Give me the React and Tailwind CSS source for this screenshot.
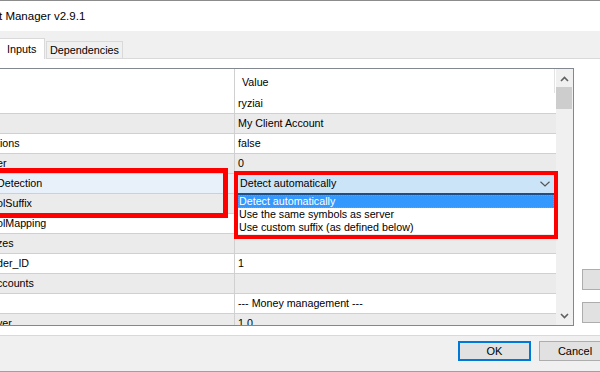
import React from "react";

const rows = [
  { name: "", value: "ryziai", bg: "w", first: true },
  { name: "", value: "My Client Account", bg: "g" },
  { name: "tions", value: "false", bg: "w" },
  { name: "er", value: "0", bg: "g" },
  { name: "Detection", value: "", bg: "s", combo: true },
  { name: "olSuffix", value: "", bg: "g" },
  { name: "olMapping", value: "", bg: "w" },
  { name: "zes", value: "", bg: "g" },
  { name: "der_ID", value: "1", bg: "w" },
  { name: "ccounts", value: "", bg: "g" },
  { name: "", value: "--- Money management ---", bg: "w" },
  { name: "ver", value: "1.0", bg: "g" },
];

function Chevron({ up }) {
  return (
    <svg width="9" height="6" viewBox="0 0 9 6">
      <polyline
        points={up ? "1,5 4.5,1.5 8,5" : "1,1 4.5,4.5 8,1"}
        fill="none"
        stroke="#606060"
        strokeWidth="1.6"
      />
    </svg>
  );
}

function Row({ r }) {
  const bg =
    r.bg === "g" ? "bg-[#ebebeb]" : r.bg === "s" ? "bg-[#e8f1fa]" : "bg-white";
  return (
    <div
      className={`flex h-[20px] flex-none ${r.first ? "" : "border-t border-[#d0d0d0]"} ${bg}`}
    >
      <div className="w-[235px] flex-none border-r border-[#d0d0d0] flex items-center overflow-hidden whitespace-nowrap">
        <span className="ml-[-3px]">{r.name}</span>
      </div>
      {r.combo ? (
        <div className="flex-1 bg-[#cce4f7] flex items-center pl-[5px] pr-[5px] justify-between">
          <span>Detect automatically</span>
          <svg width="10" height="6" viewBox="0 0 10 6" className="mr-[1px]">
            <polyline points="0.5,0.8 5,5 9.5,0.8" fill="none" stroke="#555" strokeWidth="1.2" />
          </svg>
        </div>
      ) : (
        <div className="flex-1 flex items-center pl-[3px] whitespace-nowrap overflow-hidden">
          {r.value}
        </div>
      )}
    </div>
  );
}

export default function App() {
  return (
    <div className="relative w-[600px] h-[372px] overflow-hidden bg-[#f0f0f0] font-['Liberation_Sans',Arial,sans-serif] text-black text-[10.7px] leading-none">
      {/* Title bar */}
      <div className="h-[31px] bg-white border-t border-[#8c8c8c] flex items-center pt-[1px] text-[11.5px] whitespace-nowrap">
        <span className="ml-[-1px]">t Manager v2.9.1</span>
      </div>

      {/* Tab strip */}
      <div className="h-[28px] flex items-end bg-[#f0f0f0] text-[10.8px]">
        <div className="w-[45px] h-[21px] bg-white border-t border-r border-[#d9d9d9] flex items-center pl-[7px]">
          Inputs
        </div>
        <div className="ml-px w-[77px] h-[18px] border border-[#d9d9d9] bg-[#f0f0f0] flex items-center justify-center pt-px">
          Dependencies
        </div>
        <div className="flex-1 h-px bg-[#d9d9d9]" />
      </div>

      {/* Panel */}
      <div className="h-[277px] bg-white border-b border-[#d9d9d9] flex items-start pt-[9px]">
        <div className="w-[574px] h-[258px] flex-none border-t border-r border-b border-[#828790] flex overflow-hidden">
          <div className="w-[556px] flex-none flex flex-col overflow-hidden">
            <div className="h-[24px] flex flex-none bg-white">
              <div className="w-[235px] flex-none border-r border-[#d0d0d0]" />
              <div className="w-[320px] flex-none border-r border-[#e3e3e3] flex items-center pl-[7px] pt-[2px]">
                Value
              </div>
            </div>
            {rows.map((r, i) => (
              <Row key={i} r={r} />
            ))}
          </div>
          <div className="w-[17px] flex-none bg-[#f0f0f0] flex flex-col">
            <div className="h-[17px] flex items-center justify-center pt-[2px]">
              <Chevron up />
            </div>
            <div className="mt-[1px] h-[22px] w-[16px] bg-[#cdcdcd]" />
            <div className="flex-1" />
            <div className="h-[17px] flex items-center justify-center pb-[2px]">
              <Chevron />
            </div>
          </div>
        </div>
        <div className="ml-[8px] flex flex-col pt-[201px]">
          <div className="w-[80px] h-[21px] bg-[#e1e1e1] border border-[#adadad]" />
          <div className="mt-[12px] w-[80px] h-[21px] bg-[#e1e1e1] border border-[#adadad]" />
        </div>
      </div>

      {/* Bottom buttons */}
      <div className="h-[36px] bg-[#f0f0f0] border-b border-[#a0a0a0] flex items-start pt-[5px] text-[11px]">
        <div className="ml-[458px] w-[73px] h-[20px] flex-none border-2 border-[#0078d7] bg-[#e1e1e1] flex items-center justify-center">
          OK
        </div>
        <div className="ml-[8px] w-[72px] h-[20px] flex-none border border-[#adadad] bg-[#e1e1e1] flex items-center justify-center">
          Cancel
        </div>
      </div>

      {/* Dropdown list */}
      <div className="absolute left-[238px] top-[193px] w-[316px] h-[41px] bg-white border-t-2 border-[#1f4f86] flex flex-col">
        <div className="h-[13px] bg-[#3399ff] border border-dotted border-[#e8850f] text-white flex items-center pl-[0px]">
          Detect automatically
        </div>
        <div className="h-[13px] flex items-center pl-[1px]">Use the same symbols as server</div>
        <div className="h-[13px] flex items-center pl-[1px]">Use custom suffix (as defined below)</div>
      </div>

      {/* Red annotation boxes */}
      <div className="absolute left-[-10px] top-[168px] w-[238px] h-[50px] border-[5px] border-[#ff0000]" />
      <div className="absolute left-[234px] top-[171px] w-[324px] h-[68px] border-[4px] border-[#ff0000]" />
    </div>
  );
}
